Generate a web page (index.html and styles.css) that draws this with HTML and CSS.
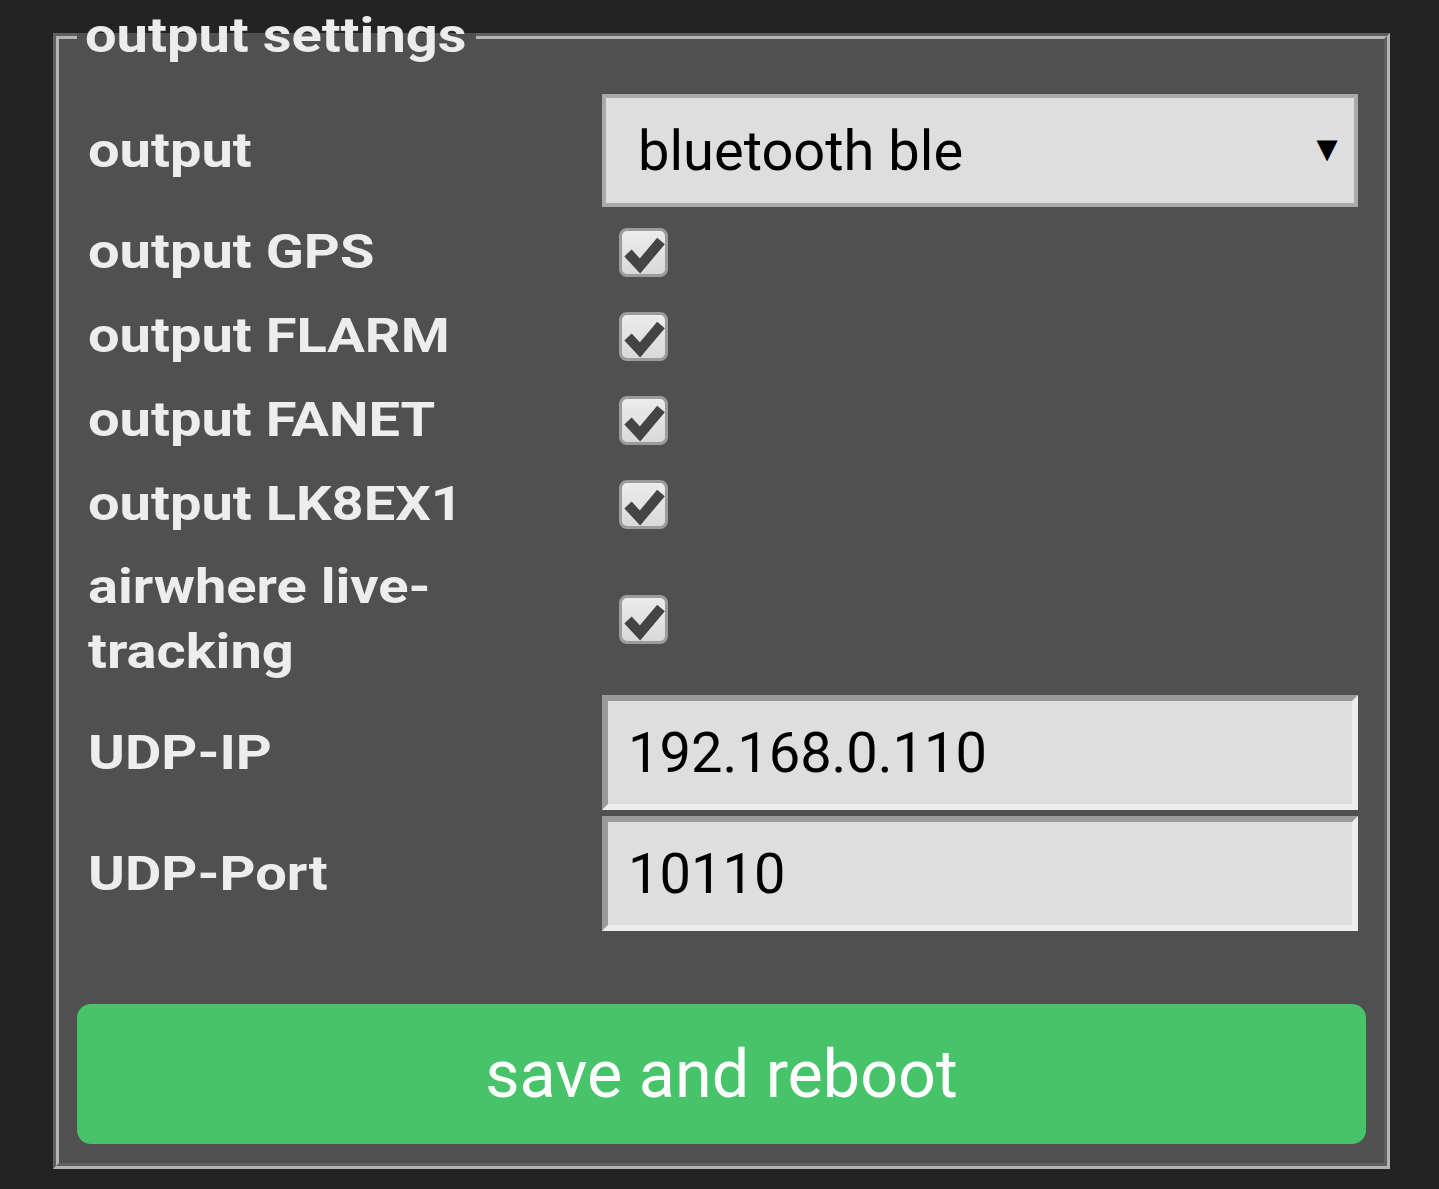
FILE: index.html
```html
<!DOCTYPE html>
<html>
<head>
<meta charset="utf-8">
<link rel="stylesheet" href="styles.css">
</head>
<body>
<div class="wrap">
  <fieldset class="panel">
    <legend class="panel-title"><span class="bold-text">output settings</span></legend>
    <div class="form">
      <div class="label row-select"><span class="bold-text">output</span></div>
      <div class="ctrl row-select">
        <div class="select"><span class="select-text">bluetooth ble</span><span class="select-arrow">▼</span></div>
      </div>

      <div class="label row-check"><span class="bold-text">output GPS</span></div>
      <div class="ctrl row-check"><span class="check"><svg viewBox="0 0 49 49" width="49" height="49"><polyline points="9,25 21,38 42,13" /></svg></span></div>

      <div class="label row-check"><span class="bold-text">output FLARM</span></div>
      <div class="ctrl row-check"><span class="check"><svg viewBox="0 0 49 49" width="49" height="49"><polyline points="9,25 21,38 42,13" /></svg></span></div>

      <div class="label row-check"><span class="bold-text">output FANET</span></div>
      <div class="ctrl row-check"><span class="check"><svg viewBox="0 0 49 49" width="49" height="49"><polyline points="9,25 21,38 42,13" /></svg></span></div>

      <div class="label row-check"><span class="bold-text">output LK8EX1</span></div>
      <div class="ctrl row-check"><span class="check"><svg viewBox="0 0 49 49" width="49" height="49"><polyline points="9,25 21,38 42,13" /></svg></span></div>

      <div class="label row-tall"><span class="bold-text">airwhere live-<br>tracking</span></div>
      <div class="ctrl row-tall"><span class="check"><svg viewBox="0 0 49 49" width="49" height="49"><polyline points="9,25 21,38 42,13" /></svg></span></div>

      <div class="label row-input"><span class="bold-text">UDP-IP</span></div>
      <div class="ctrl row-input"><input class="text-input" type="text" value="192.168.0.110"></div>

      <div class="label row-input"><span class="bold-text">UDP-Port</span></div>
      <div class="ctrl row-input"><input class="text-input" type="text" value="10110"></div>
    </div>
    <button class="save-btn" type="button">save and reboot</button>
  </fieldset>
</div>
</body>
</html>
```

FILE: styles.css
```css
html, body {
  margin: 0;
  padding: 0;
  background: #232323;
}

body {
  font-family: Roboto, "Liberation Sans", Arial, sans-serif;
  width: 1439px;
  height: 1189px;
  overflow: hidden;
}

.wrap {
  padding: 8px 49px 0 53px;
}

.panel {
  margin: 0;
  padding: 30px 18px 19px 18px;
  border: 6px groove #b4b4b4;
  background: #505050;
  min-width: 0;
}

.bold-text {
  display: inline-block;
  font-weight: 700;
  font-size: 56px;
  transform: scaleY(0.857);
}

.panel-title {
  padding: 0 9px 0 8px;
  line-height: 56px;
  height: 56px;
  color: #ececec;
}

.panel-title .bold-text {
  line-height: 56px;
  vertical-align: top;
}

.form {
  display: grid;
  grid-template-columns: 514px 756px;
  row-gap: 6px;
  padding-left: 11px;
}

.label {
  display: flex;
  align-items: center;
  color: #ededed;
}

.label .bold-text {
  line-height: 76px;
}

.ctrl {
  display: flex;
  align-items: center;
}

.row-select { height: 113px; }
.row-check { height: 78px; }
.row-tall { height: 140px; }
.row-input { height: 115px; }

.select {
  box-sizing: border-box;
  width: 756px;
  height: 113px;
  border: 4px solid #aaaaaa;
  background: #dedede;
  display: flex;
  align-items: center;
  padding: 0 9px 0 32px;
  color: #000;
  font-size: 56px;
}

.select-text {
  flex: 1;
}

.select-arrow {
  font-size: 36px;
  line-height: 1;
  margin-top: -4px;
}

.check {
  margin-left: 17px;
  width: 49px;
  height: 49px;
  box-sizing: border-box;
  border: 3px solid #9c9c9c;
  border-radius: 8px;
  background: linear-gradient(#ececec, #d9d9d9);
  display: block;
  overflow: hidden;
}

.check svg {
  display: block;
  margin: -3px;
}

.check polyline {
  fill: none;
  stroke: #444444;
  stroke-width: 10;
  stroke-linejoin: miter;
  stroke-linecap: butt;
}

.text-input {
  box-sizing: border-box;
  width: 756px;
  height: 115px;
  margin: 0;
  border-style: solid;
  border-width: 6px;
  border-color: #9a9a9a #eeeeee #eeeeee #9a9a9a;
  background: #dedede;
  padding: 0 20px;
  font-family: Roboto, "Liberation Sans", Arial, sans-serif;
  font-size: 56px;
  color: #000;
  outline: none;
}

.save-btn {
  display: block;
  box-sizing: border-box;
  width: 100%;
  height: 140px;
  margin-top: 73px;
  border: none;
  border-radius: 14px;
  background: #47c36a;
  color: #ffffff;
  font-family: Roboto, "Liberation Sans", Arial, sans-serif;
  font-size: 66.5px;
  padding: 0;
}
```
